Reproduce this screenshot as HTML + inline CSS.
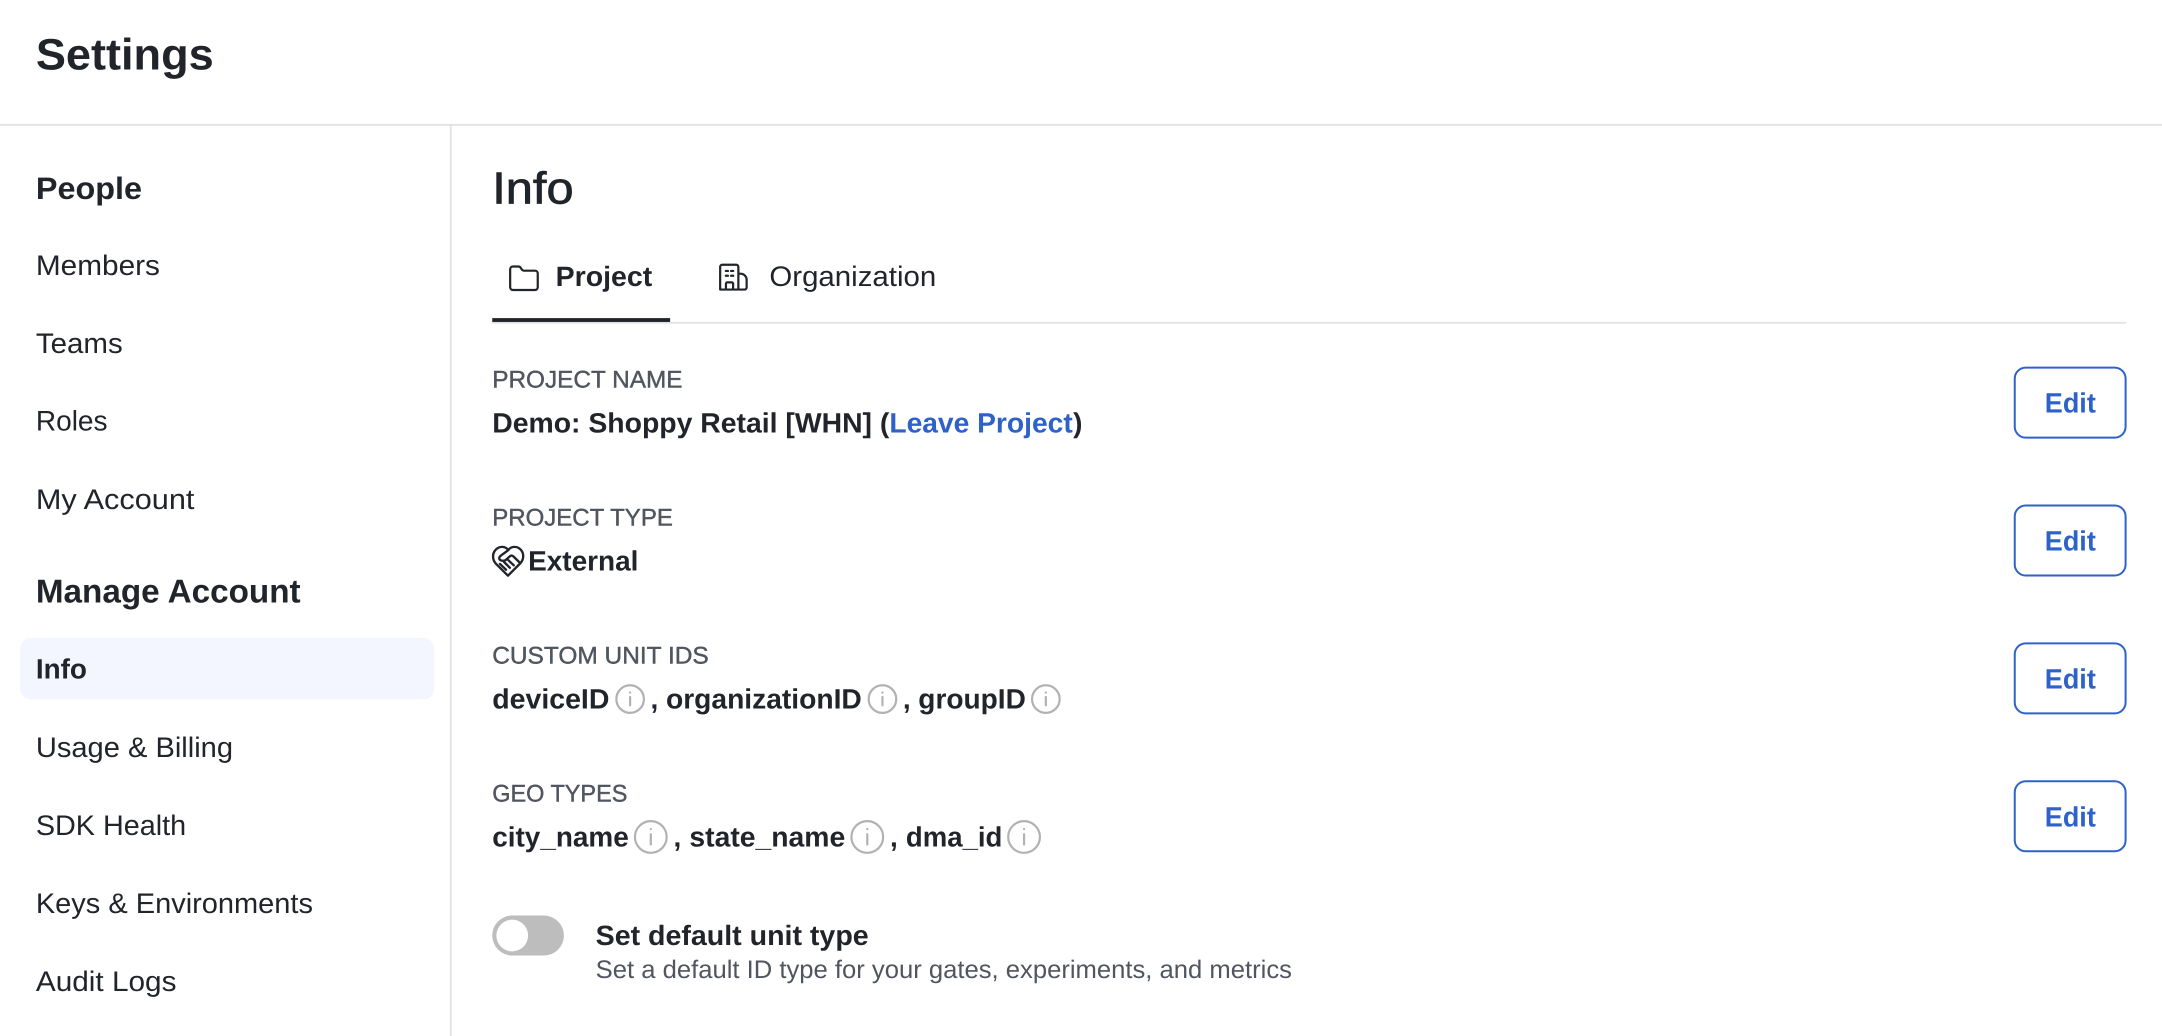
<!DOCTYPE html>
<html lang="en">
<head>
<meta charset="utf-8">
<title>Settings</title>
<style>
html,body{margin:0;padding:0;background:#fff;width:2162px;height:1036px;overflow:hidden}
svg{display:block}
text{font-family:"Liberation Sans",Arial,sans-serif;fill:#21242a;text-rendering:geometricPrecision}
.r20{font-size:20.5px}
.b20{font-size:20.3px;font-weight:700}
.lab{font-size:17.4px;fill:#50555f;stroke:#50555f;stroke-width:.3px}
.sub{font-size:18.4px;fill:#50555f}
.edit{font-size:20.3px;font-weight:700;fill:#2e62c9}
.btn{fill:#fff;stroke:#2e62c9;stroke-width:1.45}
.ic{fill:none;stroke:#21242a;stroke-width:1.6;stroke-linecap:round;stroke-linejoin:round}
.inf{fill:none;stroke:#b2b2b2;stroke-width:1.6;stroke-linecap:round}
</style>
</head>
<body>
<svg xmlns="http://www.w3.org/2000/svg" width="2162" height="1036" viewBox="0 0 1568 751.36">
<rect width="1568" height="752" fill="#fff"/>

<!-- header -->
<text x="26" y="50.3" font-size="32" font-weight="700" textLength="129" lengthAdjust="spacingAndGlyphs">Settings</text>
<rect x="0" y="90" width="1568" height="1.2" fill="#dde0e4"/>
<rect x="326.3" y="91" width="1.2" height="661" fill="#dde0e4"/>

<!-- sidebar -->
<text x="26" y="144.3" font-size="22.5" font-weight="700" textLength="77" lengthAdjust="spacingAndGlyphs">People</text>
<text class="r20" x="26" y="199.4" textLength="90" lengthAdjust="spacingAndGlyphs">Members</text>
<text class="r20" x="26" y="255.9" textLength="63" lengthAdjust="spacingAndGlyphs">Teams</text>
<text class="r20" x="26" y="312.4" textLength="52" lengthAdjust="spacingAndGlyphs">Roles</text>
<text class="r20" x="26" y="369" textLength="115" lengthAdjust="spacingAndGlyphs">My Account</text>
<text x="26" y="437" font-size="24" font-weight="700" textLength="192" lengthAdjust="spacingAndGlyphs">Manage Account</text>
<rect x="14.5" y="462.6" width="300.5" height="44.6" rx="8" fill="#f3f6fe"/>
<text class="b20" x="26" y="492.2" textLength="37" lengthAdjust="spacingAndGlyphs">Info</text>
<text class="r20" x="26" y="548.9" textLength="143" lengthAdjust="spacingAndGlyphs">Usage &amp; Billing</text>
<text class="r20" x="26" y="605.5" textLength="109" lengthAdjust="spacingAndGlyphs">SDK Health</text>
<text class="r20" x="26" y="662" textLength="201" lengthAdjust="spacingAndGlyphs">Keys &amp; Environments</text>
<text class="r20" x="26" y="718.7" textLength="102" lengthAdjust="spacingAndGlyphs">Audit Logs</text>

<!-- main title -->
<text x="357" y="147.5" font-size="32.5" stroke="#21242a" stroke-width=".55" textLength="59" lengthAdjust="spacingAndGlyphs">Info</text>

<!-- tabs -->
<path class="ic" transform="translate(368,190.3)" d="M20 20a2 2 0 0 0 2-2V8a2 2 0 0 0-2-2h-7.9a2 2 0 0 1-1.69-.9L9.6 3.9A2 2 0 0 0 7.93 3H4a2 2 0 0 0-2 2v13a2 2 0 0 0 2 2Z"/>
<text class="b20" x="403" y="207.4" textLength="70" lengthAdjust="spacingAndGlyphs">Project</text>
<path class="ic" d="M522.3 210V193.5a1.5 1.5 0 0 1 1.5-1.5h10.2a1.5 1.5 0 0 1 1.5 1.5V210ZM535.5 198.5h1.6a4.4 4.4 0 0 1 4.4 4.4v5.6a1.5 1.5 0 0 1-1.5 1.5h-4.5M526.5 210v-4.2a1 1 0 0 1 1-1h3.2a1 1 0 0 1 1 1V210M526.4 196.5h1.6M530.2 196.5h1.6M526.4 200h1.6M530.2 200h1.6"/>
<text class="r20" x="558" y="207.4" textLength="121" lengthAdjust="spacingAndGlyphs">Organization</text>
<rect x="357" y="233.5" width="1185" height="1.2" fill="#dde0e4"/>
<rect x="357" y="230.7" width="129" height="2.8" fill="#21242a"/>

<!-- project name -->
<text class="lab" x="357" y="281.2" textLength="138" lengthAdjust="spacingAndGlyphs">PROJECT NAME</text>
<text class="b20" x="357" y="313.8" textLength="288" lengthAdjust="spacingAndGlyphs">Demo: Shoppy Retail [WHN] (</text>
<text class="b20" x="645" y="313.8" textLength="133" lengthAdjust="spacingAndGlyphs" style="fill:#2e62c9">Leave Project</text>
<text class="b20" x="778.3" y="313.8">)</text>
<rect class="btn" x="1461.2" y="266.6" width="80.4" height="50.8" rx="8"/>
<text class="edit" x="1483" y="299.3" textLength="37" lengthAdjust="spacingAndGlyphs">Edit</text>

<!-- project type -->
<text class="lab" x="357" y="381.2" textLength="131" lengthAdjust="spacingAndGlyphs">PROJECT TYPE</text>
<path class="ic" style="stroke-width:1.7" d="M368.4 417.5L359.8 409C356.9 406 356.9 401.4 359.6 398.6C362.4 395.8 366.6 396 368.6 399C370.8 396 375 395.8 377.6 398.6C380.2 401.4 380 405.6 377.4 408.5ZM368.6 399L362.8 403.3C361.6 404.4 361.9 405.8 363.2 406.4C364.8 407.1 366.2 406.8 367.4 405.6L369.8 403.4C370.6 402.8 371.6 402.8 372.4 403.6L377.4 408.5M362.6 409L367 413.2M365.6 407.6L369.8 411.8M368.6 406.2L372.6 410"/>
<text class="b20" x="383" y="413.9" textLength="80" lengthAdjust="spacingAndGlyphs">External</text>
<rect class="btn" x="1461.2" y="366.6" width="80.4" height="50.8" rx="8"/>
<text class="edit" x="1483" y="399.3" textLength="37" lengthAdjust="spacingAndGlyphs">Edit</text>

<!-- custom unit ids -->
<text class="lab" x="357" y="481.2" textLength="157" lengthAdjust="spacingAndGlyphs">CUSTOM UNIT IDS</text>
<text class="b20" x="357" y="513.8" textLength="85" lengthAdjust="spacingAndGlyphs">deviceID</text>
<g class="inf"><circle cx="457" cy="507" r="10"/><path d="M457 505.5v6M457 502.2v.1"/></g>
<text class="b20" x="471.8" y="513.8">,</text>
<text class="b20" x="483" y="513.8" textLength="142" lengthAdjust="spacingAndGlyphs">organizationID</text>
<g class="inf"><circle cx="640" cy="507" r="10"/><path d="M640 505.5v6M640 502.2v.1"/></g>
<text class="b20" x="654.8" y="513.8">,</text>
<text class="b20" x="666" y="513.8" textLength="78" lengthAdjust="spacingAndGlyphs">groupID</text>
<g class="inf"><circle cx="758.5" cy="507" r="10"/><path d="M758.5 505.5v6M758.5 502.2v.1"/></g>
<rect class="btn" x="1461.2" y="466.6" width="80.4" height="50.8" rx="8"/>
<text class="edit" x="1483" y="499.3" textLength="37" lengthAdjust="spacingAndGlyphs">Edit</text>

<!-- geo types -->
<text class="lab" x="357" y="581.2" textLength="98" lengthAdjust="spacingAndGlyphs">GEO TYPES</text>
<text class="b20" x="357" y="613.8" textLength="99" lengthAdjust="spacingAndGlyphs">city_name</text>
<g class="inf"><circle cx="472" cy="607" r="11.5"/><path d="M472 605v7.5M472 601.2v.1"/></g>
<text class="b20" x="488.5" y="613.8">,</text>
<text class="b20" x="500" y="613.8" textLength="113" lengthAdjust="spacingAndGlyphs">state_name</text>
<g class="inf"><circle cx="629" cy="607" r="11.5"/><path d="M629 605v7.5M629 601.2v.1"/></g>
<text class="b20" x="645.5" y="613.8">,</text>
<text class="b20" x="657" y="613.8" textLength="70" lengthAdjust="spacingAndGlyphs">dma_id</text>
<g class="inf"><circle cx="742.7" cy="607" r="11.5"/><path d="M742.7 605v7.5M742.7 601.2v.1"/></g>
<rect class="btn" x="1461.2" y="566.6" width="80.4" height="50.8" rx="8"/>
<text class="edit" x="1483" y="599.3" textLength="37" lengthAdjust="spacingAndGlyphs">Edit</text>

<!-- toggle -->
<rect x="357" y="664" width="52" height="29" rx="14.5" fill="#bdbdbd"/>
<circle cx="371.5" cy="678.5" r="11.5" fill="#fff"/>
<text class="b20" x="432" y="685.4" textLength="198" lengthAdjust="spacingAndGlyphs">Set default unit type</text>
<text class="sub" x="432" y="709.4" textLength="505" lengthAdjust="spacingAndGlyphs">Set a default ID type for your gates, experiments, and metrics</text>
</svg>
</body>
</html>
